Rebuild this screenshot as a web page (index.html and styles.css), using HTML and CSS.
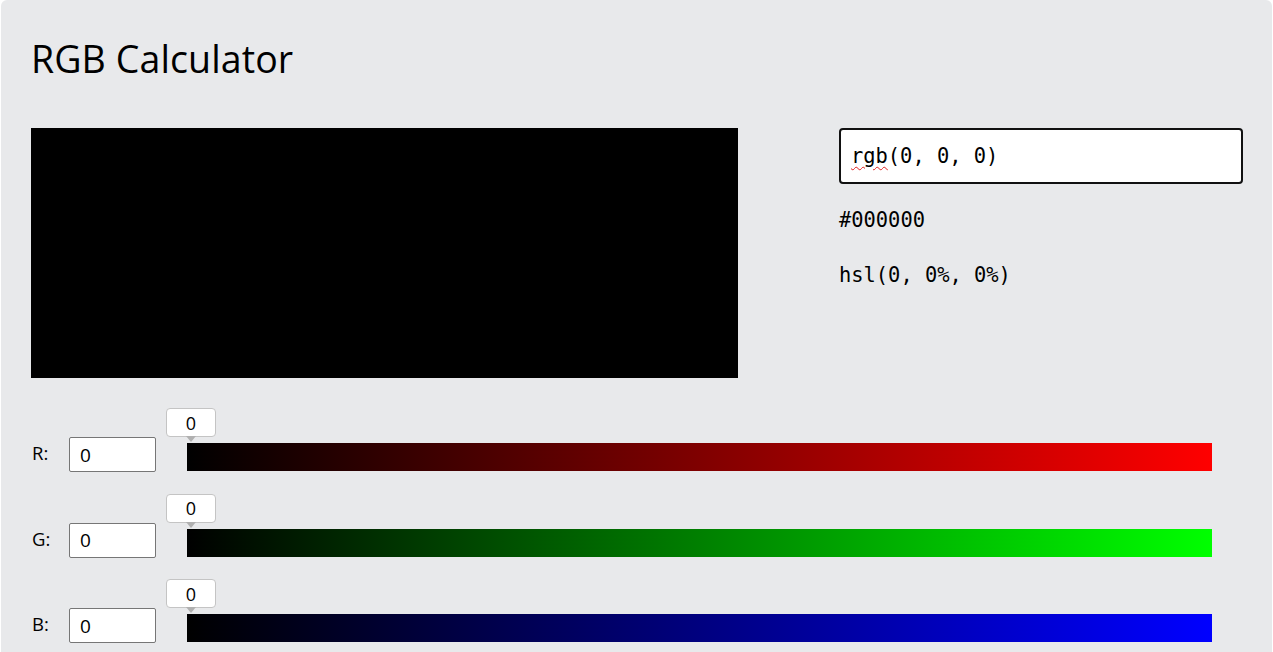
FILE: index.html
```html
<!DOCTYPE html>
<html>
<head>
<meta charset="utf-8">
<title>RGB Calculator</title>
<link rel="stylesheet" href="styles.css">
</head>
<body>
<div class="panel">
  <h1 class="title">RGB Calculator</h1>
  <div class="top">
    <div class="preview"></div>
    <div class="info">
      <div class="rgb-input"><span class="spell">rgb</span>(0, 0, 0)</div>
      <div class="info-line hex">#000000</div>
      <div class="info-line">hsl(0, 0%, 0%)</div>
    </div>
  </div>
  <div class="sliders">
    <div class="row">
      <span class="label">R:</span>
      <div class="num">0</div>
      <div class="track red">
        <div class="tip">0</div>
      </div>
    </div>
    <div class="row">
      <span class="label">G:</span>
      <div class="num">0</div>
      <div class="track green">
        <div class="tip">0</div>
      </div>
    </div>
    <div class="row">
      <span class="label">B:</span>
      <div class="num">0</div>
      <div class="track blue">
        <div class="tip">0</div>
      </div>
    </div>
  </div>
</div>
</body>
</html>
```

FILE: styles.css
```css
html, body {
  margin: 0;
  padding: 0;
  background: #ffffff;
  overflow: hidden;
}

body {
  font-family: "Open Sans", "Noto Sans", sans-serif;
  color: #000;
}

.panel {
  margin-left: 1px;
  width: 1271px;
  height: 652px;
  overflow: hidden;
  box-sizing: border-box;
  background: #e8e9eb;
  border-radius: 6px 6px 0 0;
  padding: 30px 0 0 30px;
}

.title {
  margin: 0;
  font-size: 37.5px;
  font-weight: 400;
  line-height: 58px;
  height: 98px;
  letter-spacing: 0.1px;
}

.top {
  display: flex;
  align-items: flex-start;
}

.preview {
  width: 707px;
  height: 250px;
  background: #000;
}

.info {
  margin-left: 101px;
  width: 404px;
  font-family: "DejaVu Sans Mono", monospace;
  font-size: 20.4px;
}

.rgb-input {
  height: 56px;
  box-sizing: border-box;
  border: 2px solid #111;
  border-radius: 4px;
  background: #fff;
  padding: 0 10px;
  display: flex;
  align-items: center;
  white-space: pre;
}

.spell {
  text-decoration: underline wavy #e02020;
  text-decoration-thickness: 1px;
  text-underline-offset: 3px;
}

.info-line {
  margin-top: 24px;
  line-height: 31px;
  white-space: pre;
}

.hex {
  margin-top: 21px;
}

.sliders {
  padding-top: 59px;
  display: flex;
  flex-direction: column;
  gap: 50.5px;
}

.row {
  display: flex;
  align-items: center;
  height: 35px;
}

.label {
  width: 38px;
  font-size: 18.5px;
  padding-bottom: 4px;
  padding-left: 1px;
  box-sizing: border-box;
}

.num {
  width: 87px;
  height: 35px;
  box-sizing: border-box;
  border: 1px solid #767676;
  border-radius: 2px;
  background: #fff;
  font-size: 19px;
  padding-left: 10px;
  display: flex;
  align-items: center;
}

.track {
  position: relative;
  margin-left: 31px;
  width: 1025px;
  height: 28px;
  align-self: flex-end;
  margin-bottom: 1px;
}

.red { background: linear-gradient(to right, #000, #ff0000); }
.green { background: linear-gradient(to right, #000, #00ff00); }
.blue { background: linear-gradient(to right, #000, #0000ff); }

.tip {
  position: absolute;
  left: -21px;
  top: -35px;
  width: 50px;
  height: 29px;
  box-sizing: border-box;
  background: #fff;
  border: 1px solid #c4c4c4;
  border-radius: 4px;
  font-size: 18px;
  display: flex;
  align-items: center;
  justify-content: center;
}

.tip::after {
  content: "";
  position: absolute;
  left: 19px;
  bottom: -6px;
  border-left: 5px solid transparent;
  border-right: 5px solid transparent;
  border-top: 6px solid #b0b0b0;
}
```
